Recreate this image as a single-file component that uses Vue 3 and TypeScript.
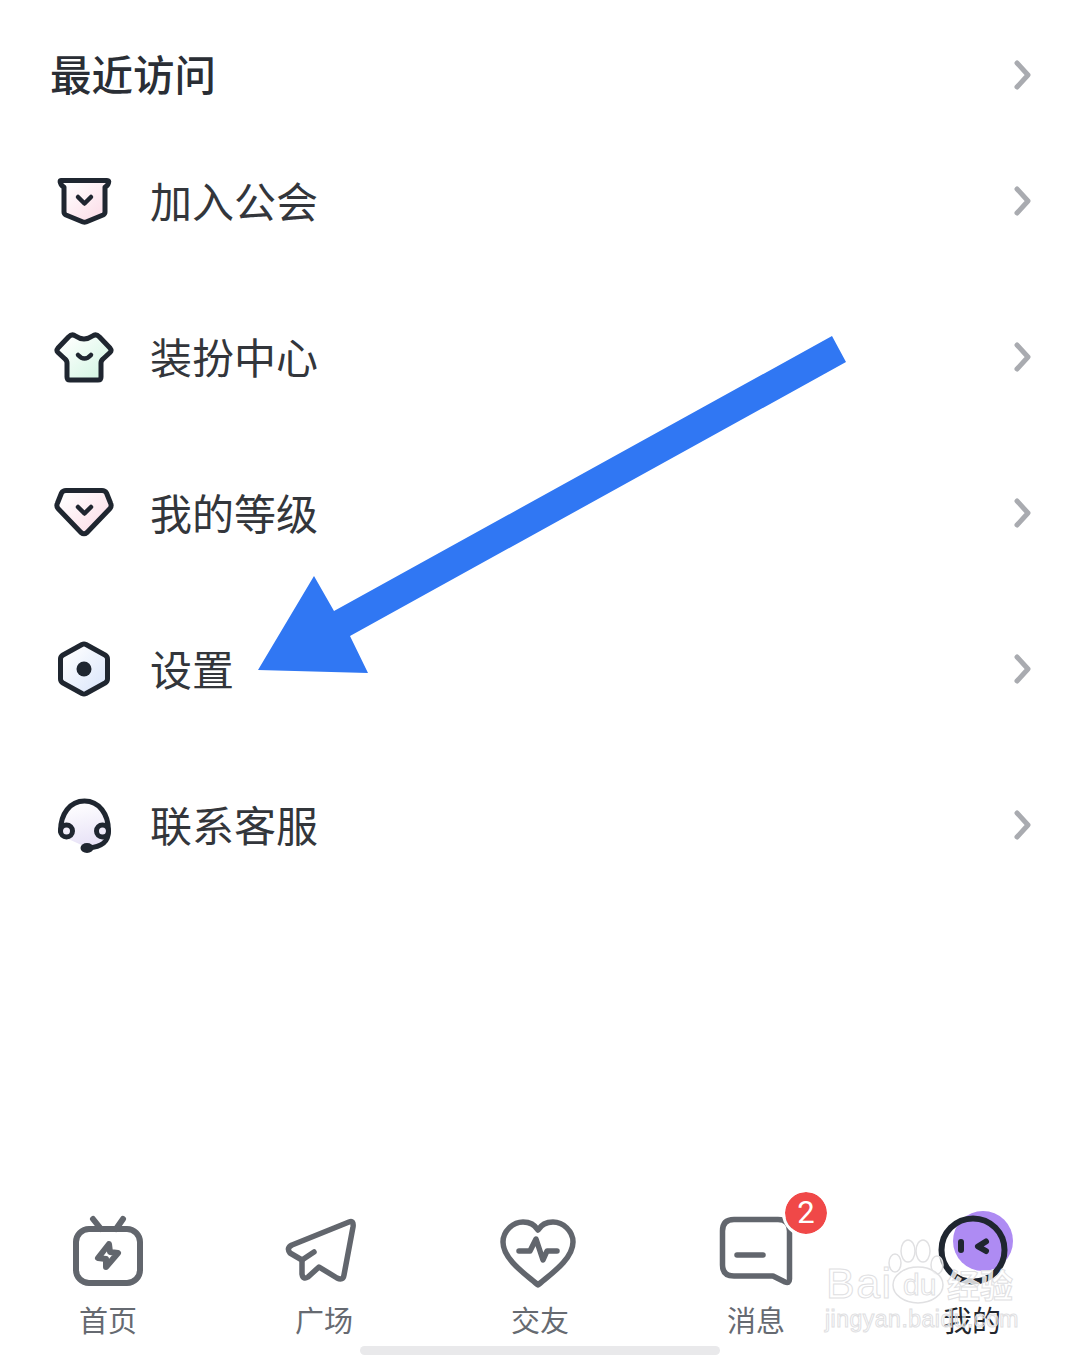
<script setup lang="ts">
type MenuItem = { label: string; icon: 'guild' | 'shirt' | 'level' | 'gear' | 'support' }
type TabItem = { label: string; icon: 'home' | 'plaza' | 'friends' | 'inbox' | 'me'; active?: boolean; badge?: number }

const menu: MenuItem[] = [
  { label: '加入公会', icon: 'guild' },
  { label: '装扮中心', icon: 'shirt' },
  { label: '我的等级', icon: 'level' },
  { label: '设置', icon: 'gear' },
  { label: '联系客服', icon: 'support' },
]

const tabs: TabItem[] = [
  { label: '首页', icon: 'home' },
  { label: '广场', icon: 'plaza' },
  { label: '交友', icon: 'friends' },
  { label: '消息', icon: 'inbox', badge: 2 },
  { label: '我的', icon: 'me', active: true },
]
</script>

<template>
  <div class="page">
    <main class="content">
      <div class="recent">
        <span class="recent-title">最近访问</span>
        <svg class="chevron" viewBox="0 0 18 30"><path d="M3 3 L14 15 L3 27" /></svg>
      </div>

      <ul class="menu">
        <li v-for="item in menu" :key="item.label" class="menu-row">
          <svg class="menu-icon" viewBox="0 0 70 70">
            <defs>
              <linearGradient id="pinkFill" x1="0.1" y1="0.1" x2="0.9" y2="0.9">
                <stop offset="0" stop-color="#ffffff" />
                <stop offset="1" stop-color="#fbdce7" />
              </linearGradient>
              <linearGradient id="mintFill" x1="0.1" y1="0.1" x2="0.9" y2="0.9">
                <stop offset="0" stop-color="#ffffff" />
                <stop offset="1" stop-color="#d3f6e3" />
              </linearGradient>
              <linearGradient id="blueFill" x1="0.1" y1="0.1" x2="0.9" y2="0.9">
                <stop offset="0" stop-color="#ffffff" />
                <stop offset="1" stop-color="#dbe6fb" />
              </linearGradient>
              <linearGradient id="lilacFill" x1="0.5" y1="0" x2="0.7" y2="1">
                <stop offset="0" stop-color="#ffffff" />
                <stop offset="1" stop-color="#e6e0f6" />
              </linearGradient>
            </defs>
            <g v-if="item.icon === 'guild'">
              <path class="line" fill="url(#pinkFill)" d="M11 14.5 H57 Q59.5 14.5 58.5 17 Q57.5 20 55 21 V46 Q55 48 53 49 L36 56 Q34.5 56.5 33 56 L16 49 Q14 48 14 46 V21 Q11.5 20 10.5 17 Q9.5 14.5 11 14.5 Z" />
              <path class="line thin" d="M28 31 L34.5 37.5 L41 31" />
            </g>
            <g v-else-if="item.icon === 'shirt'">
              <path class="line" fill="url(#mintFill)" d="M18.5 15 Q22 11.5 25.5 14 Q34 20 42.5 14 Q46 11.5 49.5 15 L60 26 Q62 28.5 60 30.5 L53 37 Q51 38.5 51 41 V55 Q51 58 48 58 H20 Q17 58 17 55 V41 Q17 38.5 15 37 L8 30.5 Q6 28.5 8 26 Z" />
              <path class="line thin" d="M28 33 Q34.5 40 41 33" />
            </g>
            <g v-else-if="item.icon === 'level'">
              <path class="line" fill="url(#pinkFill)" d="M16 12.5 H52 Q55 12.5 56.5 15 L60.5 25 Q62 28 60 30.5 L37 54.5 Q34 57 31 54.5 L8 30.5 Q6 28 7.5 25 L11.5 15 Q13 12.5 16 12.5 Z" />
              <path class="line thin" d="M28 29 L34.5 35.5 L41 29" />
            </g>
            <g v-else-if="item.icon === 'gear'">
              <path class="line" fill="url(#blueFill)" d="M32 10.5 Q34 9.5 36 10.5 L55 21 Q57.5 22.5 57.5 25 V45 Q57.5 47.5 55 49 L36 59.5 Q34 60.5 32 59.5 L13 49 Q10.5 47.5 10.5 45 V25 Q10.5 22.5 13 21 Z" />
              <circle class="solid" cx="34" cy="35" r="7.5" />
            </g>
            <g v-else>
              <path fill="url(#lilacFill)" d="M11 40 C11 24 20 11 34.5 11 C49 11 58 24 58 40 L54 53 L36 57 L16 48 Z" />
              <path class="line" fill="none" d="M10.5 41 C10.5 24 20 11 34.5 11 C49 11 58.5 24 58.5 41 C58.5 52 52 57 38 58" />
              <circle class="line" fill="none" cx="16.5" cy="41" r="6" />
              <circle class="line" fill="none" cx="52.5" cy="41" r="6" />
              <ellipse class="solid" cx="37" cy="58" rx="6.5" ry="5" />
            </g>
          </svg>
          <span class="menu-label">{{ item.label }}</span>
          <svg class="chevron" viewBox="0 0 18 30"><path d="M3 3 L14 15 L3 27" /></svg>
        </li>
      </ul>

      <!-- pointer from the list towards the settings row -->
      <svg class="pointer" viewBox="0 0 600 350">
        <polygon points="574,3 588,29 92,303 110,340 0,337 56,243 76,278" />
      </svg>
    </main>

    <nav class="tabbar">
      <div v-for="tab in tabs" :key="tab.label" class="tab" :class="{ 'tab-active': tab.active }">
        <div class="tab-icon">
          <svg viewBox="0 0 80 76">
            <g v-if="tab.icon === 'home'" class="tab-line heavy">
              <rect x="8" y="17" width="64" height="54" rx="13" />
              <path d="M25 7 L33 17 M55 7 L48 17" />
              <path d="M41 32 L30 46 L38 47 L38 55 L50 41 L42 40 Z" />
            </g>
            <g v-else-if="tab.icon === 'plaza'" class="tab-line" transform="translate(-2 0)">
              <path d="M67 10 L10 33 Q4 36 8 41 L20 48 V62 Q21 68 26 65 L37 55 L55 66 Q61 69 62 63 L71 15 Q72 8 67 10 Z" />
              <path d="M32 40 L20 48" />
            </g>
            <g v-else-if="tab.icon === 'friends'" class="tab-line" transform="translate(0 1)">
              <path d="M38 72 C28 63 3 47 3 29 C3 18 13 9 23 9 C30 9 35 12 38 17 C41 12 46 9 53 9 C63 9 73 18 73 29 C73 47 48 63 38 72 Z" />
              <path d="M19 38 H30 L36 26 L43 47 L47 38 H57" />
            </g>
            <g v-else-if="tab.icon === 'inbox'" class="tab-line" transform="translate(-1 1)">
              <path d="M19 6.5 H63 Q74.5 6.5 74.5 18 V66 Q74.5 71 70 69 L58 63 H19 Q7.5 63 7.5 52 V18 Q7.5 6.5 19 6.5 Z" />
              <path d="M22 42 H48" />
            </g>
            <g v-else>
              <circle class="me-back" cx="51" cy="29" r="30" />
              <circle class="me-ring" cx="41" cy="38" r="31.5" />
              <rect class="me-face" x="26" y="27" width="6" height="14" rx="3" />
              <path class="me-wink" d="M54 29.5 L46 34.5 L54 39" />
            </g>
          </svg>
          <span v-if="tab.badge" class="badge">{{ tab.badge }}</span>
        </div>
        <span class="tab-label">{{ tab.label }}</span>
      </div>
    </nav>

    <div class="home-indicator"></div>

    <!-- site watermark laid over the corner of the tab bar -->
    <div class="watermark">
      <svg class="paw" viewBox="0 0 70 70">
        <ellipse cx="10" cy="27" rx="6" ry="9" />
        <ellipse cx="23" cy="15" rx="7" ry="11" />
        <ellipse cx="38" cy="15" rx="7" ry="11" />
        <ellipse cx="52" cy="29" rx="6" ry="9" />
        <ellipse cx="33" cy="49" rx="25" ry="18" />
      </svg>
      <span class="mark-bai">Bai</span>
      <span class="mark-du">du</span>
      <span class="mark-cn">经验</span>
      <span class="mark-url">jingyan.baidu.com</span>
    </div>
  </div>
</template>

<style scoped>
.page {
  position: relative;
  width: 1075px;
  height: 1355px;
  display: flex;
  flex-direction: column;
  overflow: hidden;
  background: #fff;
  font-family: "Noto Sans CJK SC", "Noto Sans", sans-serif;
}

.content {
  position: relative;
  flex: 1;
}

.recent {
  height: 96px;
  padding: 27px 43px 0 50px;
  display: flex;
  align-items: center;
  justify-content: space-between;
}

.recent-title {
  margin-bottom: 5px;
  font-size: 41.5px;
  font-weight: 500;
  color: #2a2e35;
}

.menu {
  list-style: none;
  margin: 0;
  padding: 0;
}

.menu-row {
  height: 156px;
  padding: 0 43px 0 50px;
  display: flex;
  align-items: center;
}

.menu-icon {
  width: 70px;
  height: 70px;
  flex: none;
  margin-right: 30px;
}

.menu-label {
  flex: 1;
  margin-bottom: 4px;
  font-size: 42px;
  color: #33363b;
}

.chevron {
  width: 18px;
  height: 30px;
  flex: none;
  fill: none;
  stroke: #a9abb0;
  stroke-width: 5;
  stroke-linecap: round;
  stroke-linejoin: round;
}

.line {
  stroke: #1f2630;
  stroke-width: 5;
  stroke-linejoin: round;
  stroke-linecap: round;
}

.thin {
  fill: none;
  stroke-width: 4.5;
}

.solid {
  fill: #1f2630;
}

.pointer {
  position: absolute;
  left: 258px;
  top: 333px;
  width: 600px;
  height: 350px;
  fill: #3077f3;
}

.tabbar {
  display: grid;
  grid-template-columns: repeat(5, 216px);
  padding-bottom: 6px;
}

.tab {
  display: flex;
  flex-direction: column;
  align-items: center;
}

.tab-icon {
  position: relative;
  width: 80px;
  height: 76px;
}

.tab-icon svg {
  display: block;
  width: 80px;
  height: 76px;
  overflow: visible;
}

.tab-line {
  fill: none;
  stroke: #62666d;
  stroke-width: 5.5;
  stroke-linecap: round;
  stroke-linejoin: round;
}

.heavy {
  stroke-width: 6;
}

.me-back {
  fill: #ae8bf3;
}

.me-ring {
  fill: none;
  stroke: #1f2630;
  stroke-width: 6;
}

.me-face {
  fill: #1f2630;
}

.me-wink {
  fill: none;
  stroke: #1f2630;
  stroke-width: 6;
  stroke-linecap: round;
  stroke-linejoin: round;
}

.badge {
  position: absolute;
  left: 69px;
  top: -20px;
  width: 42px;
  height: 42px;
  border-radius: 50%;
  outline: 3px solid #fff;
  background: #f04848;
  color: #fff;
  font-family: Roboto, sans-serif;
  font-size: 31px;
  line-height: 42px;
  text-align: center;
}

.tab-label {
  margin-top: 10px;
  font-size: 29px;
  line-height: 42px;
  color: #666a71;
}

.tab-active .tab-label {
  color: #23272e;
}

.home-indicator {
  align-self: center;
  width: 360px;
  height: 9px;
  margin-left: 5px;
  border-radius: 5px;
  background: #e9e9eb;
}

.watermark {
  position: absolute;
  left: 824px;
  top: 1236px;
  width: 196px;
  height: 96px;
  color: rgba(255, 255, 255, 0.8);
  font-family: "Liberation Sans", sans-serif;
  -webkit-text-stroke: 1px #e0e0e2;
}

.paw {
  position: absolute;
  left: 61px;
  top: 0;
  width: 70px;
  height: 70px;
  fill: rgba(255, 255, 255, 0.6);
  stroke: #e0e0e2;
  stroke-width: 1.5;
}

.mark-bai {
  position: absolute;
  left: 2px;
  top: 24px;
  font-size: 43px;
  line-height: 46px;
  letter-spacing: 1.5px;
}

.mark-du {
  position: absolute;
  left: 79px;
  top: 34px;
  font-size: 30px;
  line-height: 30px;
}

.mark-cn {
  position: absolute;
  left: 123px;
  top: 26px;
  font-family: "Noto Sans CJK SC", sans-serif;
  font-size: 33px;
  line-height: 44px;
  font-weight: 700;
}

.mark-url {
  position: absolute;
  left: 1px;
  top: 70px;
  font-size: 23px;
  line-height: 26px;
  letter-spacing: 0.5px;
  color: rgba(255, 255, 255, 0.3);
}
</style>
